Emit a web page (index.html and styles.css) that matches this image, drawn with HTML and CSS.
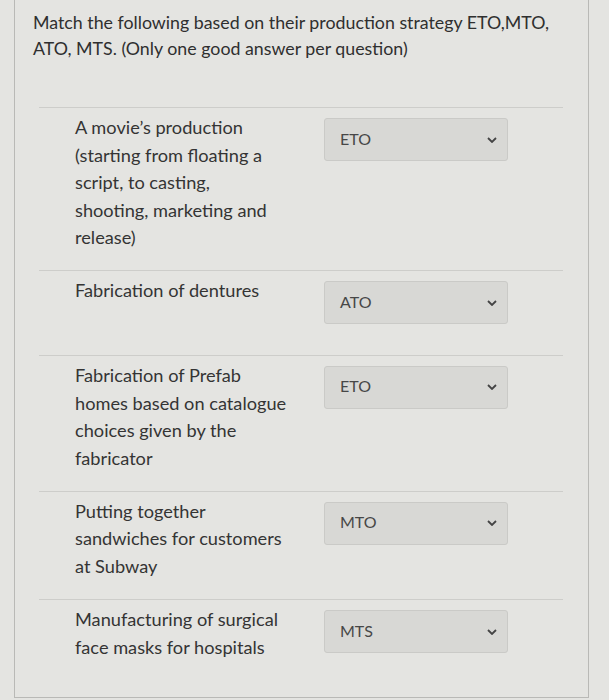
FILE: index.html
```html
<!DOCTYPE html>
<html lang="en">
<head>
  <meta charset="UTF-8">
  <title>Match production strategy</title>
  <link rel="stylesheet" href="styles.css">
</head>
<body>
  <div class="question">
    <p class="prompt">Match the following based on their production strategy ETO,MTO, ATO, MTS. (Only one good answer per question)</p>

    <div class="match-table">
      <div class="match-row">
        <div class="item">A movie’s production (starting from floating a script, to casting, shooting, marketing and release)</div>
        <div class="choice"><span>ETO</span><svg viewBox="0 0 10 6" class="chev"><path d="M1 1 L5 5 L9 1"/></svg></div>
      </div>
      <div class="match-row">
        <div class="item">Fabrication of dentures</div>
        <div class="choice"><span>ATO</span><svg viewBox="0 0 10 6" class="chev"><path d="M1 1 L5 5 L9 1"/></svg></div>
      </div>
      <div class="match-row">
        <div class="item">Fabrication of Prefab homes based on catalogue choices given by the fabricator</div>
        <div class="choice"><span>ETO</span><svg viewBox="0 0 10 6" class="chev"><path d="M1 1 L5 5 L9 1"/></svg></div>
      </div>
      <div class="match-row">
        <div class="item">Putting together sandwiches for customers at Subway</div>
        <div class="choice"><span>MTO</span><svg viewBox="0 0 10 6" class="chev"><path d="M1 1 L5 5 L9 1"/></svg></div>
      </div>
      <div class="match-row">
        <div class="item">Manufacturing of surgical face masks for hospitals</div>
        <div class="choice"><span>MTS</span><svg viewBox="0 0 10 6" class="chev"><path d="M1 1 L5 5 L9 1"/></svg></div>
      </div>
    </div>
  </div>
</body>
</html>
```

FILE: styles.css
```css
* {
  margin: 0;
  padding: 0;
  box-sizing: border-box;
}

body {
  font-family: Lato, 'Open Sans', sans-serif;
  background: #e4e4e1;
  color: #333;
  height: 700px;
  overflow: hidden;
}

/* outer question box */
.question {
  margin-left: 14px;
  width: 575px;
  height: 698px;
  border: 1px solid #b9b9b6;
  border-top: none;
  padding: 9px 0 0 18px;
}

.prompt {
  font-size: 17.8px;
  line-height: 26px;
  width: 540px;
  color: #2f2f2f;
}

.match-table {
  margin-top: 46px;
  margin-left: 6px;
  width: 524px;
}

.match-row {
  display: grid;
  grid-template-columns: 249px 184px;
  align-items: start;
  border-top: 1px solid #cdcdca;
  padding: 6px 0 18.5px 36px;
}

.item {
  font-size: 18.2px;
  line-height: 27.6px;
  width: 212px;
  color: #343434;
}

.choice {
  margin-top: 4px;
  margin-bottom: 12px;
  height: 43px;
  background: #d8d8d5;
  border: 1px solid #cacac7;
  border-radius: 3px;
  display: flex;
  align-items: center;
  justify-content: space-between;
  padding: 0 10px 0 15px;
  font-size: 16px;
  color: #474747;
}

.choice span {
  margin-top: -3px;
}

.chev {
  width: 10px;
  height: 6px;
  fill: none;
  stroke: #444;
  stroke-width: 1.8;
}
```
